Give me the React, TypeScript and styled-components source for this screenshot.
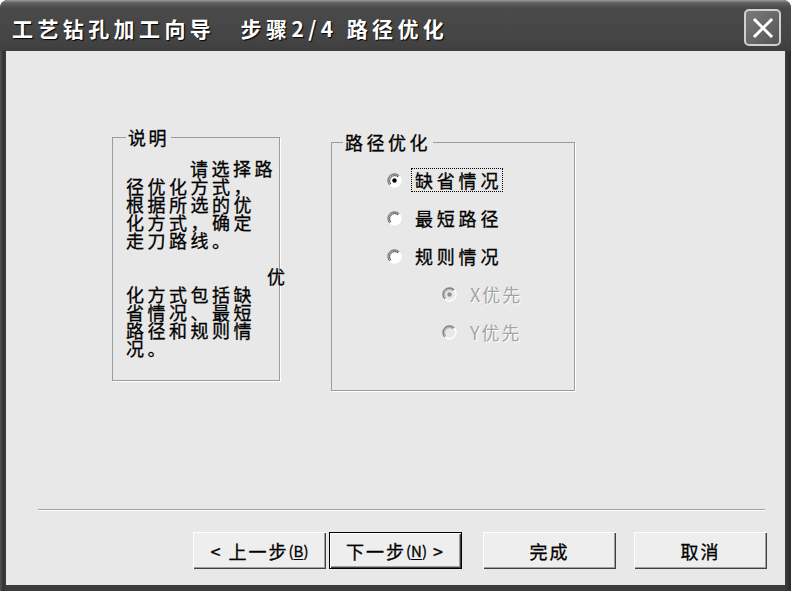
import styled, { createGlobalStyle, css } from 'styled-components';

const cjk = `"Noto Sans CJK SC", "Noto Sans", sans-serif`;

const GlobalStyle = createGlobalStyle`
    html, body {
        margin: 0;
        padding: 0;
        background: #ffffff;
        overflow: hidden;
    }
    #root {
        width: 791px;
        height: 591px;
    }
`

const Window = styled.div`
    width: 791px;
    height: 591px;
    box-sizing: border-box;
    display: flex;
    flex-direction: column;
    border-radius: 8px 8px 0 0;
    overflow: hidden;
    background: linear-gradient(90deg, #555 0, #333 3px, #3c3c3c 6px, #3c3c3c 785px, #333 788px, #2a2a2a 100%);
`

const TitleBar = styled.div`
    height: 51px;
    flex: none;
    box-sizing: border-box;
    padding: 4px 10px 0 12px;
    display: flex;
    align-items: center;
    justify-content: space-between;
    background: linear-gradient(180deg, #9a9a9a 0, #606060 3px, #4a4a4a 8px, #444 40px, #3e3e3e 100%);
`

const TitleText = styled.div`
    font-family: ${cjk};
    font-weight: 700;
    font-size: 21px;
    line-height: 24px;
    letter-spacing: 4.4px;
    color: #ffffff;
    white-space: pre;
    text-shadow: 1px 1px 1px #000;
`

const CloseButton = styled.div`
    width: 37px;
    height: 37px;
    box-sizing: border-box;
    border: 2px solid #d0d0d0;
    border-radius: 5px;
    background: linear-gradient(135deg, #7a7a7a, #555);
    display: flex;
    align-items: center;
    justify-content: center;
`

const Body = styled.div`
    flex: 1;
    margin: 0 6px 6px 6px;
    background: #e8e8e8;
    display: flex;
    flex-direction: column;
`

const Panels = styled.div`
    flex: 1;
    display: flex;
    align-items: flex-start;
    gap: 51px;
    padding: 77px 0 0 106px;
`

const Group = styled.fieldset<{ $w: number; $h: number; $top: number; $padTop: number; $padLeft: number }>`
    margin: ${(p) => p.$top}px 0 0 0;
    width: ${(p) => p.$w}px;
    height: ${(p) => p.$h}px;
    box-sizing: border-box;
    padding: ${(p) => p.$padTop}px 0 0 ${(p) => p.$padLeft}px;
    border: 1px solid #9c9c9c;
    box-shadow: 1px 1px 0 #ffffff;
    min-width: 0;
`

const Legend = styled.legend<{ $ls: number }>`
    padding: 0 2px;
    font-family: ${cjk};
    font-size: 18px;
    line-height: 18px;
    letter-spacing: ${(p) => p.$ls}px;
    color: #000;
    -webkit-text-stroke: 0.3px #000;
`

const Note = styled.div`
    font-family: ${cjk};
    font-size: 18px;
    line-height: 18px;
    letter-spacing: 3.5px;
    color: #000;
    -webkit-text-stroke: 0.3px #000;
`

const NoteLine = styled.div<{ $indent?: number }>`
    height: 18px;
    white-space: nowrap;
    padding-left: ${(p) => p.$indent ?? 0}px;
`

const RadioList = styled.div`
    padding-left: 44px;
`

const RadioRow = styled.div<{ $indent?: number }>`
    height: 38px;
    display: flex;
    align-items: center;
    gap: 10px;
    padding-left: ${(p) => p.$indent ?? 0}px;
`

const RadioLabel = styled.span<{ $focus?: boolean; $disabled?: boolean }>`
    font-family: ${cjk};
    font-size: 18px;
    line-height: 20px;
    letter-spacing: 3.8px;
    padding: 1px 0 1px 3px;
    color: #000;
    -webkit-text-stroke: 0.3px #000;
    ${(p) =>
        p.$focus &&
        css`
            outline: 1px dotted #000;
        `}
    ${(p) =>
        p.$disabled &&
        css`
            color: #a4a4a4;
            -webkit-text-stroke: 0;
            text-shadow: 1px 1px 0 #ffffff;
            letter-spacing: 2px;
        `}
`

const Separator = styled.div`
    height: 0;
    margin: 0 20px 0 32px;
    border-top: 1px solid #a0a0a0;
    border-bottom: 1px solid #ffffff;
`

const ButtonRow = styled.div`
    display: flex;
    justify-content: flex-end;
    padding: 21px 18px 16px 0;
`

const Button = styled.div<{ $space: number; $default?: boolean }>`
    width: 133px;
    height: 37px;
    box-sizing: border-box;
    margin-left: ${(p) => p.$space}px;
    background: #eeeeee;
    display: flex;
    align-items: center;
    justify-content: center;
    font-family: ${cjk};
    font-size: 18px;
    letter-spacing: 2px;
    color: #000;
    -webkit-text-stroke: 0.3px #000;
    white-space: pre;
    box-shadow: inset 1px 1px 0 #ffffff, inset -1px -1px 0 #404040, inset -2px -2px 0 #a0a0a0;
    ${(p) =>
        p.$default &&
        css`
            border: 1px solid #000;
        `}
`

const Key = styled.span`
    font-size: 15px;
    letter-spacing: 0;
    u {
        text-underline-offset: 2px;
    }
`

const Radio = ({ checked, disabled }: { checked?: boolean; disabled?: boolean }) => (
    <svg width="15" height="15" viewBox="0 0 15 15">
        <circle cx="7.5" cy="7.5" r="6.5" fill={disabled ? '#e8e8e8' : '#ffffff'} />
        <path d="M2.9 12.1 A6.5 6.5 0 0 1 12.1 2.9" fill="none" stroke="#808080" strokeWidth="1.4" />
        <path d="M3.9 11.1 A5.1 5.1 0 0 1 11.1 3.9" fill="none" stroke="#404040" strokeWidth="1" opacity={disabled ? 0.4 : 1} />
        <path d="M12.1 2.9 A6.5 6.5 0 0 1 2.9 12.1" fill="none" stroke="#ffffff" strokeWidth="1.4" />
        {checked && <circle cx="7.5" cy="7.5" r="2.2" fill={disabled ? '#909090' : '#000'} />}
    </svg>
)

const App = () => {
    return (
        <>
            <GlobalStyle />
            <Window>
                <TitleBar>
                    <TitleText>{'工艺钻孔加工向导　步骤2/4 路径优化'}</TitleText>
                    <CloseButton>
                        <svg width="22" height="22" viewBox="0 0 22 22">
                            <path d="M3 3 L19 19 M19 3 L3 19" stroke="#ffffff" strokeWidth="3" strokeLinecap="square" />
                        </svg>
                    </CloseButton>
                </TitleBar>
                <Body>
                    <Panels>
                        <Group $w={168} $h={253} $top={0} $padTop={13} $padLeft={13}>
                            <Legend $ls={2.5}>说明</Legend>
                            <Note>
                                <NoteLine $indent={64}>请选择路</NoteLine>
                                <NoteLine>径优化方式，</NoteLine>
                                <NoteLine>根据所选的优</NoteLine>
                                <NoteLine>化方式，确定</NoteLine>
                                <NoteLine>走刀路线。</NoteLine>
                                <NoteLine />
                                <NoteLine $indent={141}>优</NoteLine>
                                <NoteLine>化方式包括缺</NoteLine>
                                <NoteLine>省情况、最短</NoteLine>
                                <NoteLine>路径和规则情</NoteLine>
                                <NoteLine>况。</NoteLine>
                            </Note>
                        </Group>
                        <Group $w={244} $h={258} $top={5} $padTop={10} $padLeft={11}>
                            <Legend $ls={3.5}>路径优化</Legend>
                            <RadioList>
                                <RadioRow>
                                    <Radio checked />
                                    <RadioLabel $focus>缺省情况</RadioLabel>
                                </RadioRow>
                                <RadioRow>
                                    <Radio />
                                    <RadioLabel>最短路径</RadioLabel>
                                </RadioRow>
                                <RadioRow>
                                    <Radio />
                                    <RadioLabel>规则情况</RadioLabel>
                                </RadioRow>
                                <RadioRow $indent={55}>
                                    <Radio checked disabled />
                                    <RadioLabel $disabled>X优先</RadioLabel>
                                </RadioRow>
                                <RadioRow $indent={55}>
                                    <Radio disabled />
                                    <RadioLabel $disabled>Y优先</RadioLabel>
                                </RadioRow>
                            </RadioList>
                        </Group>
                    </Panels>
                    <Separator />
                    <ButtonRow>
                        <Button $space={0}>
                            {'< 上一步'}
                            <Key>
                                (<u>B</u>)
                            </Key>
                        </Button>
                        <Button $space={3} $default>
                            {'下一步'}
                            <Key>
                                (<u>N</u>)
                            </Key>
                            {' >'}
                        </Button>
                        <Button $space={21}>完成</Button>
                        <Button $space={18}>取消</Button>
                    </ButtonRow>
                </Body>
            </Window>
        </>
    )
}

export default App
